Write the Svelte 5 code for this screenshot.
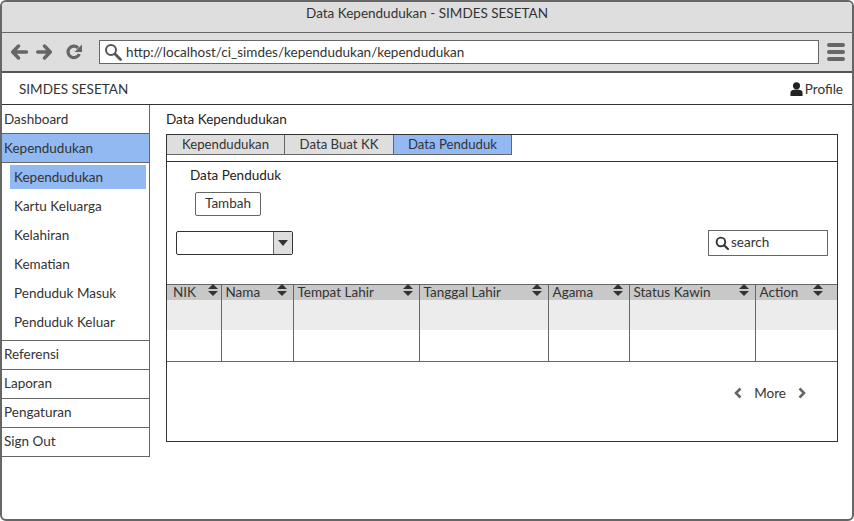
<script>
	const subItems = ['Kependudukan', 'Kartu Keluarga', 'Kelahiran', 'Kematian', 'Penduduk Masuk', 'Penduduk Keluar'];
	const bottomItems = ['Referensi', 'Laporan', 'Pengaturan', 'Sign Out'];
	const tabs = ['Kependudukan', 'Data Buat KK', 'Data Penduduk'];
	const columns = [
		{ name: 'NIK', width: 55 },
		{ name: 'Nama', width: 72 },
		{ name: 'Tempat Lahir', width: 126 },
		{ name: 'Tanggal Lahir', width: 129 },
		{ name: 'Agama', width: 81 },
		{ name: 'Status Kawin', width: 126 },
		{ name: 'Action', width: 81 }
	];
</script>

<div class="browser">
	<div class="titlebar">Data Kependudukan - SIMDES SESETAN</div>
	<div class="toolbar">
		<svg class="nav-icon" width="18" height="16" viewBox="0 0 18 16">
			<path d="M8.500 2 2.700 8l5.800 6M3.500 8H16.500" fill="none" stroke="#666" stroke-width="3.400" stroke-linecap="round" stroke-linejoin="round" />
		</svg>
		<svg class="nav-icon" width="18" height="16" viewBox="0 0 18 16">
			<path d="M8.500 2l5.800 6-5.800 6M13.500 8H1.700" fill="none" stroke="#666" stroke-width="3.400" stroke-linecap="round" stroke-linejoin="round" />
		</svg>
		<svg class="nav-icon reload" width="16" height="16" viewBox="0 0 16 16">
			<path d="M13.300 10A5.800 5.800 0 1 1 12 3.800" fill="none" stroke="#666" stroke-width="3.200" />
			<path d="M16 0.500V8H8.500z" fill="#666" />
		</svg>
		<div class="address">
			<svg width="18" height="18" viewBox="0 0 18 18">
				<circle cx="7" cy="7" r="5" fill="none" stroke="#555" stroke-width="2" />
				<path d="M11 11l5.500 5.500" stroke="#555" stroke-width="2.800" stroke-linecap="round" />
			</svg>
			<span>http://localhost/ci_simdes/kependudukan/kependudukan</span>
		</div>
		<div class="burger"><i></i><i></i><i></i></div>
	</div>

	<header class="navbar">
		<span class="brand">SIMDES SESETAN</span>
		<span class="profile">
			<svg width="13" height="14" viewBox="0 0 14 15">
				<circle cx="7" cy="4" r="3.800" fill="#222" />
				<path d="M0.500 15v-3.500C0.500 9 3 8 7 8s6.500 1 6.500 3.500V15z" fill="#222" />
			</svg>
			Profile
		</span>
	</header>

	<div class="page">
		<nav class="sidebar">
			<div class="item">Dashboard</div>
			<div class="item active">Kependudukan</div>
			<div class="sub">
				{#each subItems as sub, i}
					<div class="sub-item" class:current={i === 0}>{sub}</div>
				{/each}
			</div>
			{#each bottomItems as item}
				<div class="item lower">{item}</div>
			{/each}
		</nav>

		<main class="content">
			<div class="heading">Data Kependudukan</div>
			<section class="panel">
				<div class="tabs">
					{#each tabs as tab, i}
						<div class="tab" class:selected={i === 2}>{tab}</div>
					{/each}
				</div>
				<div class="tab-body">
					<div class="subheading">Data Penduduk</div>
					<button class="add">Tambah</button>
					<div class="controls">
						<div class="select"><span class="arrow"></span></div>
						<div class="search">
							<svg width="14" height="14" viewBox="0 0 13 13">
								<circle cx="5.500" cy="5.500" r="4" fill="none" stroke="#333" stroke-width="1.800" />
								<path d="M8.500 8.500l3.500 3.500" stroke="#333" stroke-width="2" stroke-linecap="round" />
							</svg>
							<span class="search-text">search</span>
						</div>
					</div>
					<div class="table">
						<div class="row head">
							{#each columns as col}
								<div class="cell" style="width: {col.width}px">
									<span>{col.name}</span>
									<span class="sort"><b></b><b></b></span>
								</div>
							{/each}
						</div>
						<div class="row odd">
							{#each columns as col}
								<div class="cell" style="width: {col.width}px"></div>
							{/each}
						</div>
						<div class="row">
							{#each columns as col}
								<div class="cell" style="width: {col.width}px"></div>
							{/each}
						</div>
					</div>
					<div class="pager">
						<svg width="8" height="12" viewBox="0 0 8 12"><path d="M6.500 1.500 2 6l4.500 4.500" fill="none" stroke="#666" stroke-width="2.600" /></svg>
						<span>More</span>
						<svg width="8" height="12" viewBox="0 0 8 12"><path d="M1.500 1.500 6 6l-4.500 4.500" fill="none" stroke="#666" stroke-width="2.600" /></svg>
					</div>
				</div>
			</section>
		</main>
	</div>
</div>

<style>
	:global(body) { margin: 0; background: #fff; }

	.browser {
		box-sizing: border-box;
		width: 854px; height: 521px;
		border: 2px solid #666;
		border-radius: 6px;
		background: #fff;
		overflow: hidden;
		font-family: Lato, sans-serif;
		font-size: 13.5px;
		color: #333;
	}

	.titlebar {
		height: 30px; line-height: 23px;
		background: #dedede;
		border-bottom: 1px solid #666;
		text-align: center;
	}

	.toolbar {
		display: flex; align-items: center;
		height: 38px;
		background: #dedede;
		padding-left: 8px;
		border-bottom: 2px solid #555;
	}
	.nav-icon { margin-right: 8px; }
	.reload { margin-left: 4px; margin-right: 0; }
	.address {
		display: flex; align-items: center; gap: 4px;
		box-sizing: border-box;
		width: 720px; height: 24px;
		margin-left: 17px;
		padding-left: 4px;
		background: #fff;
		border: 1px solid #666;
	}
	.burger { display: flex; flex-direction: column; gap: 3px; margin-left: 8px; }
	.burger i { display: block; width: 18px; height: 4px; border-radius: 2px; background: #666; }

	.navbar {
		display: flex; justify-content: space-between; align-items: center;
		box-sizing: border-box;
		height: 32px;
		margin-left: -1px;
		padding: 0 9px 0 18px;
		border-bottom: 1px solid #333;
	}
	.profile { display: flex; align-items: center; gap: 2px; }

	.page { display: flex; align-items: flex-start; }

	.sidebar {
		flex: none;
		box-sizing: border-box;
		width: 150px;
		margin-left: -2px;
		background: #fff;
		border: 1px solid #666;
		border-top: 0;
	}
	.item {
		box-sizing: border-box;
		height: 29px; line-height: 29px;
		padding-left: 3px;
		border-bottom: 1px solid #666;
	}
	.item.lower { line-height: 27px; }
	.sidebar > .item:last-child { border-bottom: 0; height: 28px; }
	.item.active { background: #92b9f2; }
	.sub { padding: 2px 3px 0 9px; height: 178px; box-sizing: border-box; border-bottom: 1px solid #666; }
	.sub-item { height: 29px; line-height: 24px; padding-left: 4px; }
	.sub-item.current { background: #92b9f2; height: 24px; margin-bottom: 5px; }

	.content { flex: 1; min-width: 0; padding-left: 16px; padding-right: 14px; }
	.heading { height: 29px; line-height: 29px; color: #222; }

	.panel {
		box-sizing: border-box;
		height: 308px;
		border: 1px solid #333;
	}
	.tabs { display: flex; height: 20px; }
	.tab {
		box-sizing: border-box;
		height: 20px; line-height: 19px;
		width: 118px;
		text-align: center;
		font-size: 13.2px;
		background: #dedede;
		border-right: 1px solid #666;
		border-bottom: 1px solid #666;
	}
	.tab:nth-child(2) { width: 109px; }
	.tab.selected { width: 118px; background: #92b9f2; }

	.tab-body { margin-top: 6px; border-top: 1px solid #333; }
	.subheading { margin-left: 23px; height: 30px; line-height: 27px; color: #222; }
	.add {
		display: block;
		box-sizing: border-box;
		width: 66px; height: 24px;
		margin-left: 28px;
		padding: 0 0 2px;
		background: #fff;
		border: 1px solid #666;
		border-radius: 2px;
		font: inherit; color: inherit;
	}

	.controls {
		display: flex; justify-content: space-between; align-items: flex-start;
		height: 53px;
		margin-top: 15px;
		padding: 0 9px;
	}
	.select {
		display: flex; justify-content: flex-end;
		box-sizing: border-box;
		width: 117px; height: 24px;
		border: 1px solid #333;
		border-radius: 2px;
	}
	.arrow {
		display: flex; align-items: center; justify-content: center;
		width: 18px;
		background: #dedede;
		border-left: 1px solid #666;
	}
	.arrow::after {
		content: '';
		border-top: 6px solid #333;
		border-left: 5px solid transparent;
		border-right: 5px solid transparent;
	}
	.search {
		display: flex; align-items: center; gap: 2px;
		box-sizing: border-box;
		width: 120px; height: 26px;
		margin-top: -1px;
		padding-left: 6px;
		border: 1px solid #666;
	}
	.search-text { margin-top: -2px; }

	.table { border-top: 1px solid #666; border-bottom: 1px solid #666; }
	.row { display: flex; height: 31px; }
	.row.head { height: 15px; background: #c8c8c8; }
	.row.odd { height: 30px; background: #ececec; }
	.cell {
		display: flex; justify-content: space-between;
		box-sizing: border-box;
		padding: 0 6px 0 3.500px;
		border-right: 1px solid #666;
	}
	.cell:first-child { padding: 0 3px 0 6px; }
	.cell:last-child { padding-right: 14px; border-right: 0; }
	.head .cell { line-height: 15px; }
	.sort { display: flex; flex-direction: column; gap: 2px; margin-top: -1px; }
	.sort b { display: block; border-left: 5px solid transparent; border-right: 5px solid transparent; }
	.sort b:first-child { border-bottom: 5px solid #333; }
	.sort b:last-child { border-top: 5px solid #333; }

	.pager {
		display: flex; justify-content: flex-end; align-items: center; gap: 12px;
		height: 62px;
		padding-right: 31px;
	}
</style>
